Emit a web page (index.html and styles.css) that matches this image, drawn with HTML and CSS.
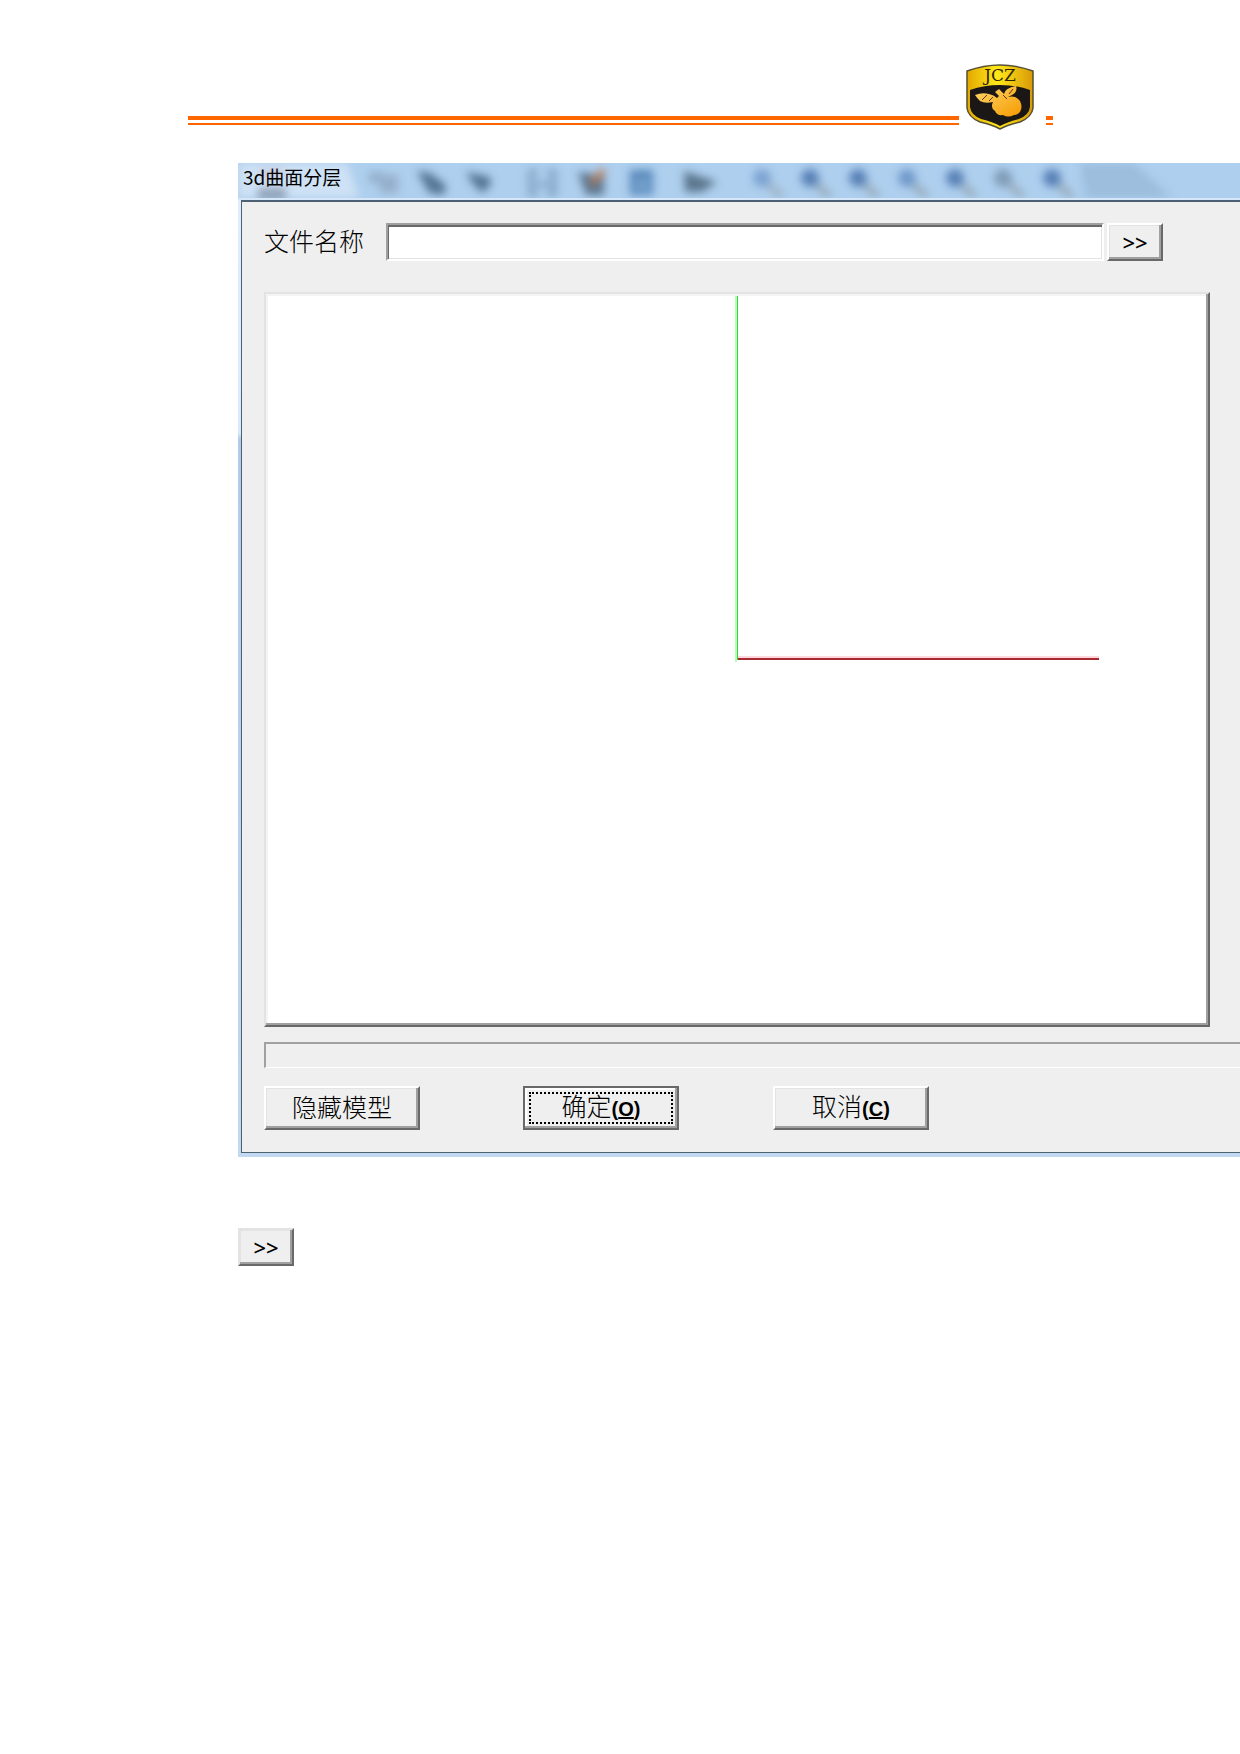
FILE: index.html
```
<!DOCTYPE html>
<html lang="zh-CN">

<head>
  <meta charset="UTF-8">
  <meta name="viewport" content="width=device-width, initial-scale=1" />
  <title>3d曲面分层</title>
  <link rel="stylesheet" href="styles.css">
</head>

<body>
  <header class="page-header">
    <div class="rule"></div>
    <svg class="logo" viewBox="0 0 68 68" role="img" aria-label="JCZ">
      <defs>
        <linearGradient id="gold" x1="0" y1="0" x2="1" y2="0">
          <stop offset="0" stop-color="#e3a800" />
          <stop offset="0.45" stop-color="#ffe81a" />
          <stop offset="1" stop-color="#d99a08" />
        </linearGradient>
        <linearGradient id="orange" x1="0" y1="0" x2="1" y2="1">
          <stop offset="0" stop-color="#ffd76a" />
          <stop offset="1" stop-color="#f59a00" />
        </linearGradient>
      </defs>
      <path fill="url(#gold)" stroke="#55502f" stroke-width="1.5"
        d="M1 7Q18 1 34 1Q50 1 67 7V44Q66 53 54 58Q41 61 34 65Q27 61 14 58Q2 53 1 44Z" />
      <path fill="#1b1717"
        d="M4 26Q18 21 34 21Q50 21 64 26V43Q63 51 53 55Q41 58 34 62Q27 58 15 55Q5 51 4 43Z" />
      <text class="logo-text" x="34" y="17" text-anchor="middle">JCZ</text>
      <path fill="url(#orange)"
        d="M27 38Q19 40 14 37Q11 34 9 31Q16 28 23 30Q28 31 31 34L33 32L29 28L33 25L38 30Q39 24 50 22Q52 28 46 31L42 33Q50 31 54 37Q57 43 54 48Q51 51 48 51Q42 54 37 51Q31 52 29 47Q24 44 27 38Z" />
      <path fill="none" stroke="#5c3605" d="M16 36L21 31M23 37L27 33M37 31L41 35M43 30L47 25" />
    </svg>
    <div class="rule rule-end"></div>
  </header>

  <main>
    <section class="dialog" aria-labelledby="dialog-title">
      <div class="title-bar">
        <!-- toolbar showing through the glass -->
        <svg class="glass" aria-hidden="true">
          <defs>
            <g id="lens">
              <path stroke="#8f9da5" stroke-width="6" d="M6 6L20 19" />
              <circle r="9" />
            </g>
          </defs>
          <path fill="#e5effa" opacity="0.6" d="M-10 -10H105L125 45H-10Z" />
          <path fill="#91b2d2" opacity="0.6" d="M840 -10H885L945 45H850Z" />
          <path fill="#75849b" opacity="0.8" d="M20 26H48V35H20Z" />
          <path fill="#c0a2b2" opacity="0.6" d="M22 8H46V14H22Z" />
          <g fill="#8299b2" opacity="0.6">
            <path d="M131 9H144V20H131Z" />
            <path d="M142 12H160V30H142Z" />
          </g>
          <g fill="#405f80" opacity="0.8">
            <path d="M179 8L192 10L208 22L206 32L191 30Z" />
            <path d="M228 9L252 14L253 22L244 30L235 21Z" />
          </g>
          <path fill="none" stroke="#6b8faf" stroke-width="5" opacity="0.7" d="M300 9H293V31H300M309 9H316V31H309M297 21H313" />
          <path fill="#526d84" opacity="0.9" d="M340 9L366 13V32H348Z" />
          <path stroke="#c07c54" stroke-width="6" d="M353 21L366 7" />
          <path fill="#4c80b5" opacity="0.9" d="M392 7H415V32H392Z" />
          <path stroke="#9cbfe0" stroke-width="3" d="M397 18H411M397 25H411" />
          <path fill="#526d84" opacity="0.9" d="M446 8L479 19L464 29H447Z" />
          <g fill="#628bc3" opacity="0.8">
            <use href="#lens" x="524" y="15" opacity="0.8" />
            <use href="#lens" x="572" y="15" fill="#416da9" />
            <use href="#lens" x="620" y="15" fill="#416da9" />
            <use href="#lens" x="669" y="15" />
            <use href="#lens" x="717" y="15" fill="#416da9" />
            <use href="#lens" x="765" y="15" fill="#748fa9" />
            <use href="#lens" x="814" y="15" fill="#416da9" />
          </g>
        </svg>
        <h1 id="dialog-title">3d曲面分层</h1>
      </div>

      <form class="dialog-body">
        <div class="file-row">
          <label for="file-name">文件名称</label>
          <input id="file-name" type="text">
          <button class="browse" type="button">&gt;&gt;</button>
        </div>

        <div class="viewport">
          <svg class="axes" viewBox="0 0 726 730" shape-rendering="crispEdges" aria-label="XY">
            <path stroke="#b5ffb5" stroke-width="2" d="M362 0V366" />
            <path stroke="#36d23f" d="M363.5 0V364" />
            <path stroke="#ffd8dd" stroke-width="2" d="M364 361H726" />
            <path stroke="#a52b30" stroke-width="2" d="M364 363H726" />
          </svg>
        </div>

        <div class="status"></div>

        <div class="actions">
          <button type="button">隐藏模型</button>
          <button class="default" type="submit">确定<span class="key">(<u>O</u>)</span></button>
          <button type="button">取消<span class="key">(<u>C</u>)</span></button>
        </div>
      </form>
    </section>

    <button class="browse sample" type="button">&gt;&gt;</button>
  </main>
</body>

</html>
```
FILE: styles.css
```
:root {
  --color-rule: #ff6600;
  --color-face: #efefef;
  --color-light: #e3e3e3;
  --color-shadow: #a0a0a0;
  --color-dark: #696969;
  --color-frame: #4d6175;
}

* {
  box-sizing: border-box;
}

body {
  margin: 0;
  background-color: white;
  color: black;
  font-family: "Liberation Sans", "Noto Sans CJK SC", sans-serif;
  overflow-x: hidden;
}

.page-header {
  padding: 64px 187px 0 188px;

  display: flex;
  align-items: flex-end;
}

.rule {
  flex: 1;
  height: 9px;
  margin-bottom: 7px;
  border-top: 4px solid var(--color-rule);
  border-bottom: 2px solid var(--color-rule);
}

.rule-end {
  flex: 0 0 7px;
}

.logo {
  width: 68px;
  height: 68px;
  margin: 0 12px 0 7px;
}

.logo-text {
  font-family: "DejaVu Serif", serif;
  font-size: 17px;
  fill: #2e2500;
}

main {
  padding: 31px 0 60px 238px;
}

/* dialog */

.dialog {
  padding: 0 0 4px 3px;
  background: linear-gradient(#e1edfa 0, #dbeafb 270px, #b0cbea 276px, #c3d8f1 100%);
}

.title-bar {
  position: relative;
  height: 37px;
  margin-left: -3px;
  padding: 1px 5px;
  background-color: #aecfee;
  border-bottom: 2px solid #d5e6f8;
  overflow: hidden;

  h1 {
    position: relative;
    margin: 0;
    font-family: "Noto Sans CJK SC", sans-serif;
    font-size: 19px;
    font-weight: normal;
    line-height: 26px;
  }
}

.glass {
  position: absolute;
  top: 0;
  left: 0;
  width: 100%;
  height: 100%;
  filter: blur(4px);
}

.dialog-body {
  padding: 21px 0 22px 22px;
  background-color: var(--color-face);
  border: solid var(--color-frame);
  border-width: 2px 0 1px 1px;
}

.file-row {
  margin-right: 77px;

  display: flex;
  align-items: center;

  label {
    width: 122px;
    font-size: 25px;
    font-weight: 300;
    line-height: 38px;
  }

  input {
    flex: 1;
    min-width: 0;
    height: 38px;
    margin-right: 3px;
    padding: 0 6px;
    background-color: white;
    border: 2px solid white;
    border-top-color: var(--color-shadow);
    border-left-color: var(--color-shadow);
    box-shadow: inset 1px 2px var(--color-dark), inset -1px -1px var(--color-light);
    font-size: 25px;
  }
}

button {
  padding: 0;
  background-color: var(--color-face);
  border: 2px solid;
  border-color: white var(--color-dark) var(--color-dark) white;
  box-shadow: inset -2px -2px var(--color-shadow), inset 1px 1px var(--color-light);
  color: black;
  font-family: inherit;
  font-size: 25px;
  font-weight: 300;
  line-height: 32px;
}

.browse {
  flex-shrink: 0;
  width: 56px;
  height: 38px;
  font-family: "Noto Sans", sans-serif;
  font-size: 22px;
  font-weight: 500;
  line-height: 28px;
}

.viewport {
  margin: 31px 30px 0 0;
  border: 2px solid;
  border-color: var(--color-light) var(--color-dark) var(--color-dark) var(--color-light);
  box-shadow: inset -2px -2px var(--color-shadow), inset 2px 2px #f4f4f4;
  background-color: white;

  display: flex;
  justify-content: center;
}

.axes {
  width: 77%;
  margin-top: 2px;
  overflow: hidden;
}

.status {
  height: 26px;
  margin-top: 15px;
  border: solid var(--color-shadow);
  border-width: 2px 0 0 2px;
  border-bottom: 1px solid white;
}

.actions {
  margin-top: 18px;

  display: flex;
  gap: 94px;

  button {
    width: 156px;
    height: 44px;
  }

  .default {
    margin-left: 9px;
    border-color: var(--color-dark);
    box-shadow: inset -2px -2px var(--color-shadow), inset 2px 2px white;
    outline: 2px dotted black;
    outline-offset: -8px;
  }
}

.key {
  font-size: 20px;
  font-weight: bold;
}

.sample {
  display: block;
  margin-top: 71px;
  border-color: var(--color-light) var(--color-dark) var(--color-dark) var(--color-light);
}
```
